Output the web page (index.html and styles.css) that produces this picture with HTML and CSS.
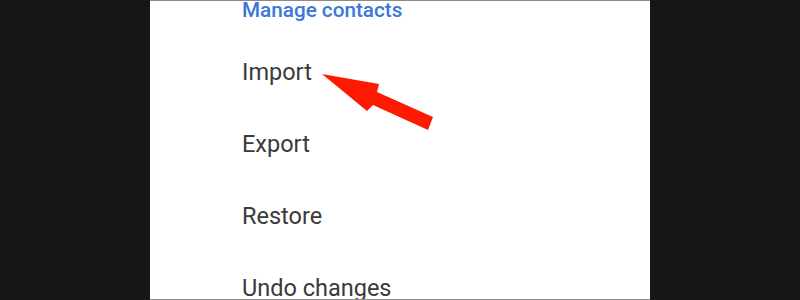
FILE: index.html
```html
<!DOCTYPE html>
<html>
<head>
<meta charset="utf-8">
<link rel="stylesheet" href="styles.css">
</head>
<body>
<div class="stage">
  <div class="panel">
    <div class="header">Manage contacts</div>
    <ul class="menu">
      <li>Import</li>
      <li>Export</li>
      <li>Restore</li>
      <li>Undo changes</li>
    </ul>
  </div>
  <svg class="arrow" width="800" height="300" viewBox="0 0 800 300">
    <polygon points="322,74 379,84 377,92 433,117 428,130 373,105 367,111" fill="#fe1a00"/>
  </svg>
</div>
</body>
</html>
```
FILE: styles.css
```css
html, body {
  margin: 0;
  padding: 0;
}
body {
  background: #161616;
  width: 800px;
  height: 300px;
  overflow: hidden;
  font-family: Roboto, "Liberation Sans", sans-serif;
}
.stage {
  position: relative;
  width: 800px;
  height: 300px;
}
.panel {
  margin-left: 150px;
  width: 500px;
  height: 300px;
  box-sizing: border-box;
  background: #ffffff;
  border-top: 1px solid #8a8a8a;
  border-bottom: 1px solid #8a8a8a;
  padding-left: 92px;
  overflow: hidden;
}
.header {
  margin-top: -1px;
  font-size: 20.7px;
  line-height: 21px;
  font-weight: 500;
  color: #3b77db;
}
.menu {
  list-style: none;
  margin: 15px 0 0 0;
  padding: 0;
}
.menu li {
  font-size: 23.5px;
  line-height: 72px;
  height: 72px;
  color: #3a3a3a;
}
.arrow {
  position: absolute;
  left: 0;
  top: 0;
}
```
